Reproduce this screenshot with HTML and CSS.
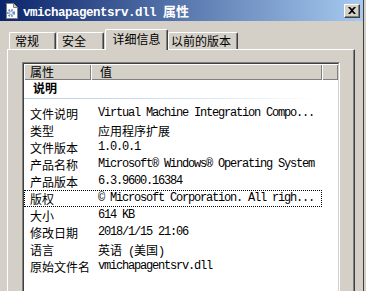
FILE: index.html
```html
<!DOCTYPE html>
<html lang="zh-CN">
<head>
<meta charset="utf-8">
<title>vmichapagentsrv.dll 属性</title>
<link rel="stylesheet" href="styles.css">
</head>
<body>
<div class="window">
  <div class="titlebar">
    <svg class="title-icon" width="16" height="16" viewBox="0 0 16 16">
      <path d="M2.5 0.5 H9.5 L13.5 4.5 V15.5 H2.5 Z" fill="#fff" stroke="#808080"/>
      <path d="M9.5 0.5 V4.5 H13.5" fill="#d4d0c8" stroke="#808080"/>
      <circle cx="7" cy="10" r="3" fill="none" stroke="#6f8fc0" stroke-width="2.2" stroke-dasharray="1.6 1.2"/>
      <circle cx="7" cy="10" r="2.2" fill="#a9bede"/>
      <circle cx="7" cy="10" r="0.9" fill="#fff"/>
    </svg>
    <span class="title"><span class="tm">vmichapagentsrv.dll </span>属性</span>
    <div class="close">
      <svg width="8" height="7" viewBox="0 0 8 7">
        <path d="M0 0 H2 L4 2 L6 0 H8 L5 3.5 L8 7 H6 L4 5 L2 7 H0 L3 3.5 Z" fill="#000"/>
      </svg>
    </div>
  </div>
  <div class="tabs">
    <div class="tab t1">常规</div>
    <div class="tab t2">安全</div>
    <div class="tab t3 active">详细信息</div>
    <div class="tab t4">以前的版本</div>
  </div>
  <div class="panel">
    <div class="lv-outer">
      <div class="lv-inner">
        <div class="header">
          <div class="hcell h1">属性</div>
          <div class="hcell h2">值</div>
          <div class="hcell h3"></div>
        </div>
        <div class="list">
          <div class="group">
            <div class="group-title">说明</div>
            <div class="group-line"></div>
          </div>
          <div class="row"><span>文件说明</span><span class="m">Virtual Machine Integration Compo...</span></div>
          <div class="row"><span>类型</span><span>应用程序扩展</span></div>
          <div class="row"><span>文件版本</span><span class="m">1.0.0.1</span></div>
          <div class="row"><span>产品名称</span><span class="m">Microsoft® Windows® Operating System</span></div>
          <div class="row"><span>产品版本</span><span class="m">6.3.9600.16384</span></div>
          <div class="row focus"><span>版权</span><span class="m">© Microsoft Corporation. All righ...</span></div>
          <div class="row"><span>大小</span><span class="m">614 KB</span></div>
          <div class="row"><span>修改日期</span><span class="m">2018/1/15 21:06</span></div>
          <div class="row"><span>语言</span><span>英语<span class="m"> (</span>美国<span class="m">)</span></span></div>
          <div class="row"><span>原始文件名</span><span class="m">vmichapagentsrv.dll</span></div>
        </div>
      </div>
    </div>
  </div>
</div>
</body>
</html>
```

FILE: styles.css
```css
* {
  box-sizing: border-box;
  margin: 0;
  padding: 0;
}

html, body {
  width: 366px;
  height: 291px;
  overflow: hidden;
  background: #d4d0c8;
}

body {
  font-family: "Noto Sans CJK SC", sans-serif;
  font-size: 12px;
  color: #000;
}

.window {
  width: 364px;
  height: 291px;
  border-right: 1px solid #404040;
  background: #d4d0c8;
  overflow: hidden;
}

.titlebar {
  height: 21px;
  display: flex;
  align-items: center;
  padding-left: 4px;
  background: linear-gradient(to right, #0a246a, #a6caf0);
}

.title-icon {
  flex: none;
  display: block;
  margin-top: 1px;
}

.title {
  margin-left: 3px;
  margin-top: 2px;
  color: #fff;
  font-weight: bold;
  font-size: 13px;
  line-height: 14px;
  white-space: nowrap;
}

.tm {
  font-family: "Liberation Mono", monospace;
  font-size: 12.5px;
  letter-spacing: -0.5px;
}

.close {
  margin-left: auto;
  margin-right: 3px;
  width: 16px;
  height: 14px;
  background: #d4d0c8;
  border-top: 1px solid #fff;
  border-left: 1px solid #fff;
  border-right: 1px solid #404040;
  border-bottom: 1px solid #404040;
  box-shadow: inset -1px -1px #808080;
  display: flex;
  align-items: center;
  justify-content: center;
}

.close svg {
  display: block;
  margin-left: -1px;
  margin-top: -1px;
}

.tabs {
  height: 28px;
  display: flex;
  align-items: flex-end;
  padding-left: 9px;
}

.tab {
  height: 17px;
  line-height: 15px;
  border-top: 1px solid #fff;
  border-left: 1px solid #fff;
  border-right: 1px solid #404040;
  box-shadow: inset -1px 0 #808080;
  border-radius: 2px 2px 0 0;
  background: #d4d0c8;
  white-space: nowrap;
}

.t1 {
  width: 47px;
  padding-left: 5px;
}

.t2 {
  width: 47px;
  margin-left: 1px;
  padding-left: 4px;
}

.t3 {
  width: 63px;
  margin-left: 1px;
  text-align: center;
}

.t4 {
  width: 70px;
  padding-left: 2px;
}

.tab.active {
  height: 21px;
  line-height: 16px;
  padding-top: 1px;
  margin-bottom: -1px;
  position: relative;
  z-index: 1;
}

.panel {
  margin-left: 7px;
  width: 348px;
  height: 242px;
  border-top: 1px solid #fff;
  border-left: 1px solid #fff;
  border-right: 1px solid #404040;
  box-shadow: inset -1px 0 #808080;
  padding-top: 12px;
  padding-left: 14px;
}

.lv-outer {
  width: 318px;
  height: 240px;
  border-top: 1px solid #808080;
  border-left: 1px solid #808080;
  border-right: 1px solid #fff;
  border-bottom: 1px solid #fff;
}

.lv-inner {
  height: 100%;
  border-top: 1px solid #404040;
  border-left: 1px solid #404040;
  border-right: 1px solid #d4d0c8;
  border-bottom: 1px solid #d4d0c8;
  background: #fff;
}

.header {
  display: flex;
  height: 16px;
  background: #d4d0c8;
}

.hcell {
  height: 16px;
  line-height: 15px;
  padding-left: 6px;
  box-shadow: inset 1px 1px #fff, inset -1px -1px #808080;
  white-space: nowrap;
}

.h1 {
  width: 67px;
}

.h2 {
  width: 231px;
  padding-left: 9px;
}

.h3 {
  flex: 1;
}

.group {
  height: 25px;
  padding-top: 1px;
}

.group-title {
  font-weight: bold;
  line-height: 14px;
  padding-left: 9px;
}

.group-line {
  margin-top: 3px;
  height: 1px;
  width: 298px;
  background: linear-gradient(to right, #b4cfee, #d6e5f6 60%, #ffffff);
}

.row {
  display: grid;
  grid-template-columns: 68px auto;
  width: 298px;
  height: 17px;
  line-height: 17px;
  padding-left: 6px;
  white-space: nowrap;
}

.row.focus {
  outline: 1px dotted #000;
  outline-offset: -1px;
}

.m {
  font-family: "Liberation Mono", monospace;
  font-size: 12px;
  letter-spacing: -1.2px;
}
```
